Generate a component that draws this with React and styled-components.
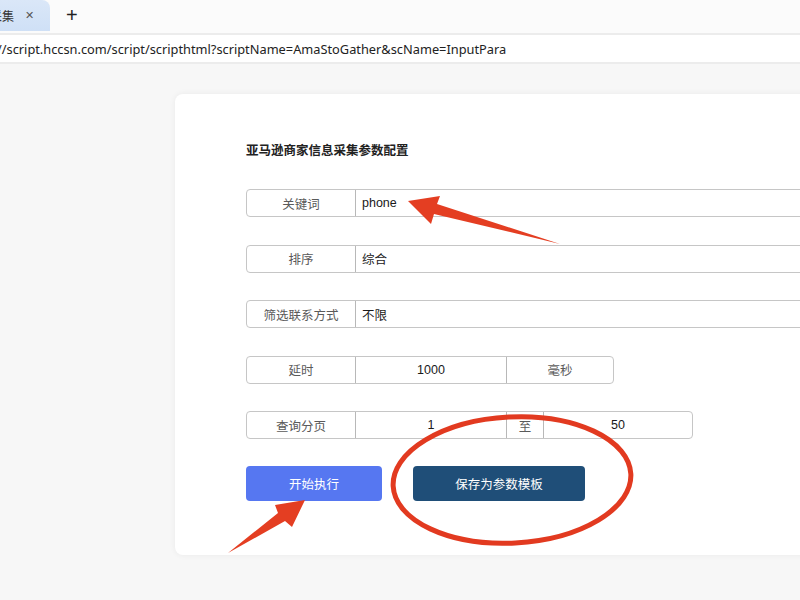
import React from 'react'
import styled, { createGlobalStyle } from 'styled-components'

const GlobalStyle = createGlobalStyle`
  html, body {
    margin: 0;
    padding: 0;
    width: 800px;
    height: 600px;
    overflow: hidden;
    font-family: "Liberation Sans", "Noto Sans CJK SC", sans-serif;
    background: #f7f7f7;
  }
`

const Screen = styled.div`
  position: relative;
  width: 800px;
  height: 600px;
  display: flex;
  flex-direction: column;
  overflow: hidden;
`

const TabBar = styled.div`
  height: 33px;
  display: flex;
  align-items: flex-start;
  background: #fbfbfb;
`

const Tab = styled.div`
  width: 50px;
  height: 31px;
  display: flex;
  align-items: center;
  justify-content: flex-end;
  gap: 11px;
  padding-right: 16px;
  box-sizing: border-box;
  overflow: hidden;
  white-space: nowrap;
  background: linear-gradient(180deg, #dae7f8 0%, #cfe0f6 100%);
  border-top-right-radius: 8px;
  font-size: 12px;
  color: #333;
`

const TabClose = styled.span`
  font-size: 11px;
  color: #555;
`

const NewTab = styled.span`
  margin-left: 16px;
  height: 31px;
  display: flex;
  align-items: center;
  font-size: 20px;
  font-weight: 300;
  color: #222;
`

const AddressBar = styled.div`
  height: 27px;
  display: flex;
  align-items: center;
  background: #fff;
  border-top: 2px solid #ececec;
  border-bottom: 2px solid #ececec;
  overflow: hidden;
  white-space: nowrap;
`

const Url = styled.span`
  margin-left: -3px;
  font-family: "Noto Sans", "Liberation Sans", sans-serif;
  font-size: 12.8px;
  color: #222;
`

const Page = styled.div`
  flex: 1;
  background: #f7f7f7;
  padding: 30px 0 0 175px;
`

const Card = styled.div`
  width: 700px;
  height: 461px;
  box-sizing: border-box;
  background: #fff;
  border-radius: 8px;
  box-shadow: 0 0 6px rgba(0, 0, 0, 0.06);
  padding: 47px 0 0 71px;
`

const Title = styled.h2`
  margin: 0 0 28px;
  font-size: 12.5px;
  line-height: 20px;
  font-weight: bold;
  color: #222;
`

const Fields = styled.div`
  display: flex;
  flex-direction: column;
  gap: 27.5px;
`

const Row = styled.div`
  display: flex;
  width: ${p => p.$width}px;
  height: 28px;
  box-sizing: border-box;
  border: 1px solid #c6c6c6;
  border-radius: 4px;
  font-size: 12.5px;
`

const Cell = styled.div`
  width: ${p => (p.$width ? `${p.$width}px` : 'auto')};
  flex: ${p => (p.$width ? 'none' : 1)};
  display: flex;
  align-items: center;
  justify-content: ${p => (p.$left ? 'flex-start' : 'center')};
  padding-left: ${p => (p.$left ? '6px' : '0')};
  box-sizing: border-box;
  color: ${p => (p.$muted ? '#5a5a5a' : '#1a1a1a')};
  & + & {
    border-left: 1px solid #b8b8b8;
  }
`

const Actions = styled.div`
  display: flex;
  gap: 31px;
  margin-top: 27px;
`

const Button = styled.button`
  width: ${p => p.$width}px;
  height: 35px;
  border: none;
  border-radius: 4px;
  background: ${p => p.$bg};
  color: #fff;
  font-family: "Noto Sans CJK SC", sans-serif;
  font-size: 12.5px;
  cursor: pointer;
`

const Marks = styled.svg`
  position: absolute;
  left: 0;
  top: 0;
  pointer-events: none;
`

const fields = [
  { label: '关键词', value: 'phone' },
  { label: '排序', value: '综合' },
  { label: '筛选联系方式', value: '不限' },
]

export default function App() {
  return (
    <Screen>
      <GlobalStyle />
      <TabBar>
        <Tab>
          <span>商家信息采集</span>
          <TabClose>✕</TabClose>
        </Tab>
        <NewTab>+</NewTab>
      </TabBar>
      <AddressBar>
        <Url>//script.hccsn.com/script/scripthtml?scriptName=AmaStoGather&amp;scName=InputPara</Url>
      </AddressBar>
      <Page>
        <Card>
          <Title>亚马逊商家信息采集参数配置</Title>
          <Fields>
            {fields.map(f => (
              <Row key={f.label} $width={620}>
                <Cell $width={108} $muted>{f.label}</Cell>
                <Cell $left>{f.value}</Cell>
              </Row>
            ))}
            <Row $width={368}>
              <Cell $width={108} $muted>延时</Cell>
              <Cell $width={151}>1000</Cell>
              <Cell $muted>毫秒</Cell>
            </Row>
            <Row $width={447}>
              <Cell $width={108} $muted>查询分页</Cell>
              <Cell $width={151}>1</Cell>
              <Cell $width={37} $muted>至</Cell>
              <Cell>50</Cell>
            </Row>
          </Fields>
          <Actions>
            <Button $width={136} $bg="#5677f1">开始执行</Button>
            <Button $width={172} $bg="#1f4e78">保存为参数模板</Button>
          </Actions>
        </Card>
      </Page>
      <Marks width="800" height="600" viewBox="0 0 800 600">
        <polygon points="408,201 440,196 437,204 560,244 434,214 431,224" fill="#e43e22" />
        <polygon points="305,500 292,527 285,521 228,553 278,513 275,505" fill="#e43e22" />
        <ellipse cx="512" cy="480" rx="119" ry="63" fill="none" stroke="#e23a20" strokeWidth="5" transform="rotate(-3 512 480)" />
      </Marks>
    </Screen>
  )
}
